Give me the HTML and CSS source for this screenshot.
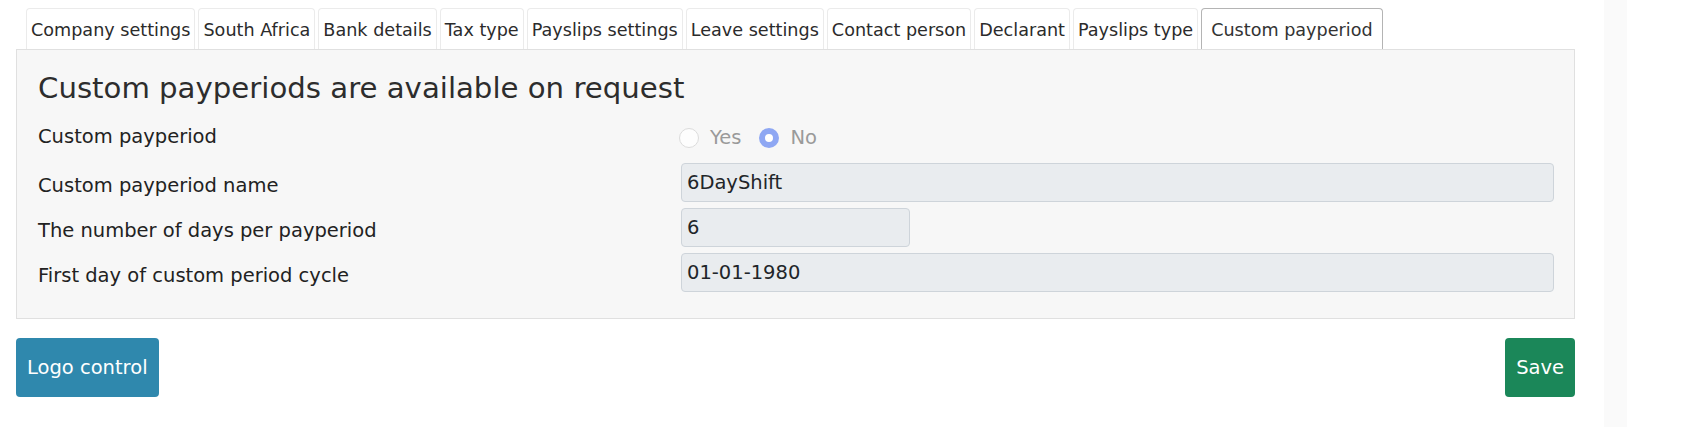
FILE: index.html
```html
<!DOCTYPE html>
<html lang="en">
<head>
<meta charset="utf-8">
<title>Custom payperiod</title>
<link rel="stylesheet" href="styles.css">
</head>
<body>
<div class="page">
  <div class="main">
    <ul class="tabs">
      <li class="tab">Company settings</li>
      <li class="tab">South Africa</li>
      <li class="tab">Bank details</li>
      <li class="tab">Tax type</li>
      <li class="tab">Payslips settings</li>
      <li class="tab">Leave settings</li>
      <li class="tab">Contact person</li>
      <li class="tab">Declarant</li>
      <li class="tab">Payslips type</li>
      <li class="tab active">Custom payperiod</li>
    </ul>
    <div class="panel">
      <h2 class="title">Custom payperiods are available on request</h2>
      <div class="row row-radio">
        <label class="label">Custom payperiod</label>
        <div class="radios">
          <label class="radio"><input type="radio" name="cp" disabled><span>Yes</span></label>
          <label class="radio"><input type="radio" name="cp" checked disabled><span>No</span></label>
        </div>
      </div>
      <div class="row">
        <label class="label">Custom payperiod name</label>
        <input class="field" type="text" value="6DayShift" readonly>
      </div>
      <div class="row">
        <label class="label">The number of days per payperiod</label>
        <input class="field field-short" type="text" value="6" readonly>
      </div>
      <div class="row">
        <label class="label">First day of custom period cycle</label>
        <input class="field" type="text" value="01-01-1980" readonly>
      </div>
    </div>
    <div class="actions">
      <button class="btn btn-logo" type="button">Logo control</button>
      <button class="btn btn-save" type="button">Save</button>
    </div>
  </div>
  <div class="strip"></div>
</div>
</body>
</html>
```

FILE: styles.css
```css
html, body {
  margin: 0;
  padding: 0;
  background: #ffffff;
}

body {
  font-family: "DejaVu Sans", Verdana, sans-serif;
  color: #212529;
  height: 427px;
  overflow: hidden;
}

.page {
  display: flex;
  height: 427px;
}

.main {
  width: 1559px;
  margin-left: 16px;
}

.strip {
  width: 23px;
  margin-left: 29px;
  background: #fafafa;
  height: 427px;
}

.tabs {
  list-style: none;
  margin: 8px 0 0 0;
  padding: 0 0 0 10px;
  display: flex;
  gap: 3px;
  height: 41px;
}

.tab {
  box-sizing: border-box;
  height: 41px;
  padding: 10px 4px 0 4px;
  border: 1px solid #ebebeb;
  border-bottom: none;
  border-radius: 4px 4px 0 0;
  font-size: 17.6px;
  line-height: 22px;
  color: #2b2b2b;
  background: #ffffff;
  white-space: nowrap;
}

.tab.active {
  border-color: #b4b4b4;
  padding-left: 9px;
  padding-right: 9px;
  color: #333333;
}

.panel {
  border: 1px solid #e0e0e0;
  background: #f7f7f7;
  padding: 21px 20px 26px 21px;
}

.title {
  margin: 0;
  font-size: 29.2px;
  line-height: 35px;
  font-weight: normal;
  color: #2d2d2d;
}

.row {
  display: grid;
  grid-template-columns: 643px 1fr;
  align-items: start;
  height: 39px;
  margin-top: 6px;
}

.row-radio {
  height: 28px;
  margin-top: 18px;
  margin-bottom: 11px;
}

.label {
  font-size: 19.5px;
  line-height: 24px;
  padding-top: 11px;
  color: #222222;
  white-space: nowrap;
}

.row-radio .label {
  padding-top: 1px;
}

.radios {
  display: flex;
  align-items: center;
  height: 28px;
  margin-left: -2px;
}

.radio {
  display: flex;
  align-items: center;
  font-size: 19.5px;
  line-height: 24px;
  color: #9a9a9a;
  margin-right: 18px;
}

.radio input {
  appearance: none;
  -webkit-appearance: none;
  box-sizing: border-box;
  width: 20px;
  height: 20px;
  margin: 0 11px 0 0;
  border-radius: 50%;
  border: 1px solid #dcdcdc;
  background: #fdfdfd;
}

.radio input:checked {
  border: 6px solid #8ea7f3;
  background: #ffffff;
}

.field {
  box-sizing: border-box;
  height: 39px;
  width: 100%;
  margin: 0;
  padding: 0 5px;
  border: 1px solid #ced4da;
  border-radius: 4px;
  background: #e9ecef;
  font-family: "DejaVu Sans", Verdana, sans-serif;
  font-size: 19.5px;
  line-height: 24px;
  color: #212529;
  outline: none;
}

.field-short {
  width: 229px;
}

.actions {
  display: flex;
  justify-content: space-between;
  margin-top: 19px;
}

.btn {
  height: 59px;
  border: none;
  border-radius: 4px;
  padding: 0 11px;
  font-family: "DejaVu Sans", Verdana, sans-serif;
  font-size: 19.5px;
  line-height: 24px;
  color: #ffffff;
  cursor: pointer;
}

.btn-logo {
  background: #2f88ad;
}

.btn-save {
  background: #1b8759;
}
```
